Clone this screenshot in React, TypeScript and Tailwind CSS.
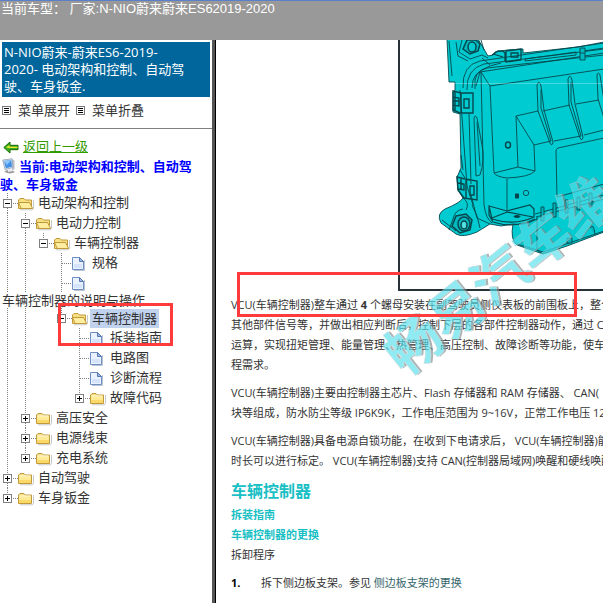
import { useState } from 'react';

interface TreeNode {
    id: string;
    label: string;
    wrapped?: boolean;
    children?: TreeNode[];
}

const TREE: TreeNode[] = [
    {
        id: 'ea',
        label: '电动架构和控制',
        children: [
            {
                id: 'power',
                label: '电动力控制',
                children: [
                    {
                        id: 'vcu',
                        label: '车辆控制器',
                        children: [
                            { id: 'spec', label: '规格' },
                            { id: 'desc', label: '车辆控制器的说明与操作', wrapped: true },
                            {
                                id: 'vcu-repair',
                                label: '车辆控制器',
                                children: [
                                    { id: 'guide', label: '拆装指南' },
                                    { id: 'circuit', label: '电路图' },
                                    { id: 'diag', label: '诊断流程' },
                                    { id: 'dtc', label: '故障代码', children: [] },
                                ],
                            },
                        ],
                    },
                ],
            },
            { id: 'hv', label: '高压安全', children: [] },
            { id: 'harness', label: '电源线束', children: [] },
            { id: 'charge', label: '充电系统', children: [] },
        ],
    },
    { id: 'ad', label: '自动驾驶', children: [] },
    { id: 'body', label: '车身钣金', children: [] },
];

// The first three subsystems hang under the first root, next to 电动力控制
const EXPANDED = ['ea', 'power', 'vcu', 'vcu-repair'];

// dotted connector, 18px per level
function Guide({ up, down, across }: { up?: boolean; down?: boolean; across?: boolean }) {
    return (
        <svg className="h-5 w-[18px] flex-none" viewBox="0 0 18 20" stroke="#808080" strokeDasharray="1 1" fill="none" aria-hidden="true">
            {up && <path d="M7.5 0V10" />}
            {down && <path d="M7.5 10V20" />}
            {across && <path d="M8 10.5H18" />}
        </svg>
    );
}

function ToggleBox({ open, last }: { open: boolean; last: boolean }) {
    return (
        <svg className="h-5 w-[18px]" viewBox="0 0 18 20" fill="none" aria-hidden="true">
            <g stroke="#808080">
                <path d="M7.5 0V6" strokeDasharray="1 1" />
                {!last && <path d="M7.5 15V20" strokeDasharray="1 1" />}
                <path d="M13 10.5H18" strokeDasharray="1 1" />
                <rect x="3.5" y="6.5" width="8" height="8" fill="#fff" />
            </g>
            <path d={open ? 'M5 10.5H10' : 'M5 10.5H10M7.5 8V13'} stroke="#000" />
        </svg>
    );
}

function FolderIcon({ open }: { open: boolean }) {
    return (
        <svg className="h-4 w-4 flex-none" viewBox="0 0 16 16" aria-hidden="true">
            <path d="M2 14.8H14.5L15.5 13V5" fill="none" stroke="#c9c9c9" />
            <path d="M.5 13.5V5L2 3.5H6L7.5 5H13.5V13.5Z" fill="#f7df84" stroke="#c09a3a" />
            {open ? (
                <path d="M.5 7.5H11.5L14.7 13.5H3.2Z" fill="#ffee9f" stroke="#c09a3a" />
            ) : (
                <>
                    <path d="M1 6.5H13V13H1Z" fill="#ffeb96" />
                    <path d="M1 10H13V13H1Z" fill="#fbd968" />
                    <path d="M1.5 6H12.5" stroke="#fffbe0" />
                </>
            )}
        </svg>
    );
}

function PageIcon() {
    return (
        <svg className="h-4 w-4 flex-none" viewBox="0 0 16 16" aria-hidden="true">
            <path d="M2 15.5H12.500V5" fill="none" stroke="#b9c3d4" />
            <path d="M.5 2.500H7.5L11.5 6.5V14.5H.5Z" fill="#eaf2ff" stroke="#6f8fc4" />
            <path d="M2 9H10V13H2Z" fill="#d5e4fb" />
            <path d="M7.5 2.500V6.5H11.5Z" fill="#9db9e6" stroke="#5778b4" />
        </svg>
    );
}

function MenuIcon() {
    return (
        <svg className="h-[9px] w-[9px] flex-none" viewBox="0 0 9 9" aria-hidden="true">
            <rect x=".5" y=".5" width="8" height="8" fill="#fff" stroke="#777" />
            <path d="M2 2.5H7M2 4.5H7M2 6.5H7" stroke="#000" />
        </svg>
    );
}

function BackIcon() {
    return (
        <svg className="h-4 w-4 flex-none" viewBox="0 0 16 16" aria-hidden="true">
            <path d="M.8 8.500L7 3V6.3H15V10.7H7V14Z" fill="#3db01c" stroke="#146a08" />
            <path d="M3 8.500L6.5 6V7.7H14.5V9.1H6.5Z" fill="#f4e637" />
        </svg>
    );
}

function ComputerIcon() {
    return (
        <svg className="mr-px inline-block h-4 w-4 align-[-3px]" viewBox="0 0 16 16" aria-hidden="true">
            <path d="M2 13.5Q8 10.5 13 14Q8 17 2 13.5Z" fill="#9b9b9b" />
            <path d="M10 1L12.500 2.5V11L10 13Z" fill="#b9c1cb" />
            <path d="M.8 2L10 .8L11 9.5L3 11.5Z" fill="#dce5ef" stroke="#8f9dae" strokeWidth=".8" />
            <path d="M2 3L9.2 2L10 8.7L3.8 10.2Z" fill="#4291e6" />
            <path d="M2 3L9.2 2L5 7Z" fill="#8dc5fb" />
            <path d="M6 11.3L9 10.7L11 13L6 14Z" fill="#e8ecf0" />
        </svg>
    );
}

interface TreeRowsProps {
    nodes: TreeNode[];
    trail: boolean[];
    openIds: string[];
    onToggle: (id: string) => void;
}

function TreeRows({ nodes, trail, openIds, onToggle }: TreeRowsProps) {
    return (
        <ul>
            {nodes.map((node, i) => {
                const last = i === nodes.length - 1;
                const open = openIds.includes(node.id);
                const selected = node.id === 'vcu-repair';
                return (
                    <li key={node.id}>
                        <div className="flex h-5 items-center whitespace-nowrap">
                            {trail.map((line, t) => <Guide key={t} up={line} down={line} />)}
                            {node.children ? (
                                <button type="button" className="flex-none" aria-label={node.label} onClick={() => onToggle(node.id)}>
                                    <ToggleBox open={open} last={last} />
                                </button>
                            ) : (
                                <Guide up down={!last} across />
                            )}
                            {node.children ? <FolderIcon open={open} /> : <PageIcon />}
                            {!node.wrapped && (
                                <a href="#" className={selected ? 'ml-0.5 bg-[#c1d2ee] px-0.5 leading-[19px]' : 'ml-1'}>{node.label}</a>
                            )}
                        </div>
                        {node.wrapped && <a href="#" className="block h-[15px] pl-0.5 leading-[15px]">{node.label}</a>}
                        {node.children && open && (
                            <TreeRows nodes={node.children} trail={[...trail, !last]} openIds={openIds} onToggle={onToggle} />
                        )}
                    </li>
                );
            })}
        </ul>
    );
}

function Sidebar() {
    const [openIds, setOpenIds] = useState<string[]>(EXPANDED);

    const toggle = (id: string) => {
        setOpenIds(prev => prev.includes(id) ? prev.filter(x => x !== id) : [...prev, id]);
    };

    return (
        <aside className="w-[215px] flex-none border-r-3 border-[#555] text-[13px] text-[#333]">
            <h1 className="mx-0.5 mt-0.5 bg-[#00669c] px-0.5 py-0.5 leading-[17px] text-white">
                N-NIO蔚来-蔚来ES6-2019-<br />2020- 电动架构和控制、自动驾<br />驶、车身钣金.
            </h1>
            <div className="flex h-8 items-center border-b border-[#808080] pb-1 pl-0.5">
                <MenuIcon />
                <button type="button" className="mr-1.5 ml-[7px]" onClick={() => setOpenIds(EXPANDED)}>菜单展开</button>
                <MenuIcon />
                <button type="button" className="ml-[7px]" onClick={() => setOpenIds([])}>菜单折叠</button>
            </div>
            <div className="mt-2 flex h-5 items-center gap-1 pl-[3px]">
                <BackIcon />
                <a href="#" className="text-[#339900] underline">返回上一级</a>
            </div>
            <p className="leading-[18px] font-bold text-[#0000ff]">
                <span className="pl-0.5"><ComputerIcon />当前:电动架构和控制、自动驾</span><br />驶、车身钣金
            </p>
            <nav className="relative">
                <TreeRows nodes={TREE} trail={[]} openIds={openIds} onToggle={toggle} />
                <div className="pointer-events-none absolute top-[110px] left-[58px] h-[43px] w-[115px] border-3 border-[#ff3b3b]" />
            </nav>
        </aside>
    );
}

function Illustration() {
    return (
        <svg className="h-[249px] w-[204px]" viewBox="400 40 204 249" fill="none" stroke="#06474d" strokeWidth=".9" aria-hidden="true">
            <path
                d="M447 39L449 82H455V90L453 92V112L460 114L461 168L457 177L458 190L463 198Q460 203 445 209Q436 214 441 223L456 234Q463 238 477 232L490 224L501 226L513 224Q510 240 517 245L543 254L567 246L604 232V42L578 47L523 53V49L507 50L495 52L493 55L488 56L478 39Z"
                fill="#00cbd1"
            />
            {/* rim */}
            <path d="M460 90L467 186L473 205M463 88Q462 65 480 61L604 43M467 90Q466 69 484 64L604 49M472 88Q472 72 487 68L604 55M476 86L480 72L604 53" />
            <path d="M525 59L576 52V55L525 61ZM583 51L604 48M475 89V80Q476 68 501 63M482 58L490 65M449 41L452 76M456 42L458 56L468 61" />
            <path d="M469 113L471 184M474 118Q475 114 477 118L482 145Q485 160 480 175L476 176ZM477 122L480 166M481 72L484 205Q486 219 492 223" />
            <path d="M461 155L463 170M460 170L465 178M471 195L477 218L490 224" />
            {/* top bolt */}
            <path d="M462 40L459 52L470 59L482 55L488 58M481 40L484 50" />
            <path d="M467 40L463 49L470 54L478 51L480 44L476 40Z" fill="#00b9c0" strokeWidth="1.5" />
            <ellipse cx="472" cy="47" rx="4" ry="5" fill="#00cbd1" strokeWidth="1.5" />
            {/* clips */}
            <path d="M492 55L498 51H503L505 53V61M506 51L521 49V60L506 62ZM511 53H518V57H511ZM493 54L503 57" strokeWidth="1.3" />
            <path d="M580 48H585V60H580ZM580 53H585" fill="#00b9c0" />
            <path d="M453 91L461 93L473 93V113L460 113L453 110ZM461 93V113M464 99H469V108H464ZM453 97L459 98V106L453 105M455 91V110M453 101H459" strokeWidth="1.4" />
            <path d="M457 177L465 179L477 181V200L464 198L458 190ZM466 179V198M470 186H474V195H470ZM458 183L464 184V190L458 189M461 178V190" strokeWidth="1.4" />
            {/* mounting ear */}
            <path d="M463 198Q470 203 466 210M463 209Q455 210 453 219L449 230M472 205L477 216L480 228M442 220L456 231" />
            <path d="M456 216L466 214L472 220L470 230L460 233L452 226Z" fill="#00b9c0" strokeWidth="1.5" />
            <ellipse cx="464" cy="224" rx="6" ry="7" strokeWidth="1.5" />
            <ellipse cx="464" cy="225" rx="3" ry="4" fill="#52dde0" strokeWidth="1.5" />
            {/* cover */}
            <path d="M481 72L490 86L604 69M490 86L494 173Q497 177 507 178Q530 177 535 171L534 145L516 116L518 167M494 173L518 167L535 171" />
            <path d="M516 116L538 111M543 111L570 105M576 104L599 100M534 145L551 141M554 141L581 136M584 135L604 130" />
            <path d="M538 111L537 85Q539 79 541 86L544 110L553 142Q552 147 550 143ZM541 90V108L551 141" />
            <path d="M569 105L568 79Q570 73 572 80L575 104L583 137Q582 142 580 138ZM571 82V102L581 136" />
            <path d="M598 99L597 75Q598 71 600 75L604 101M598 99L604 118" />
            <path d="M604 138L558 148Q556 149 556 151L557 197L604 184M507 179V211" />
            <ellipse cx="508" cy="145" rx="2.5" ry="3" strokeWidth="1.5" />
            <rect x="515.5" y="194" width="3" height="4" fill="#073f45" />
            <circle cx="526" cy="193" r="2.7" />
            {/* tray and lower flange */}
            <path d="M489 206L507 211L530 205L534 209L534 217Q515 226 492 219ZM492 218L507 212L533 217M489 206V215L493 222Q515 229 535 219" strokeWidth="1.2" />
            <ellipse cx="517" cy="216.5" rx="3" ry="1" fill="#073f45" />
            <path d="M535 214L604 195M536 217L604 199M537 217V250L543 254M513 224Q524 226 537 219M517 244L543 252L604 231" />
            <path d="M541 207H544V221H541ZM553 203H556V217H553ZM565 200H568V213H565ZM577 197H580V210H577ZM589 193H592V207H589ZM567 238H572V243H567ZM590 228Q594 222 595 235" fill="#00b3ba" />
            <path d="M400 83.5H604" stroke="#fff" strokeOpacity=".3" />
        </svg>
    );
}

function Watermark() {
    return (
        <svg className="pointer-events-none absolute top-0 left-0 h-[400px] w-full opacity-65" aria-hidden="true">
            <g
                transform="translate(177 323) rotate(-39)"
                className="font-['Noto_Sans_CJK_SC',sans-serif] text-[55px] font-bold"
            >
                <text x="2" y="20" fill="#7d8a8c">畅易汽车维</text>
                <text x="0" y="19" fill="#55dfec" stroke="#b5ced1" strokeWidth=".6">畅易汽车维</text>
            </g>
        </svg>
    );
}

function Manual() {
    return (
        <main className="relative min-w-0 flex-1 overflow-hidden border-l border-black bg-white text-[11px] leading-5 whitespace-nowrap text-[#333]">
            <div className="ml-[182px] h-[251px] border-b-2 border-l-2 border-[#263238]">
                <Illustration />
            </div>
            <div className="pl-[15px]">
                <p className="mt-1">
                    VCU(车辆控制器)整车通过 <b>4</b> 个螺母安装在副驾驶员侧仪表板的前围板上，整个<br />
                    其他部件信号等，并做出相应判断后，控制下层的各部件控制器动作，通过 CA<br />
                    运算，实现扭矩管理、能量管理、热管理、高压控制、故障诊断等功能，使车辆<br />
                    程需求。
                </p>
                <p className="mt-2">
                    VCU(车辆控制器)主要由控制器主芯片、Flash 存储器和 RAM 存储器、 CAN(<br />
                    块等组成，防水防尘等级 IP6K9K，工作电压范围为 9~16V，正常工作电压 12
                </p>
                <p className="mt-2">
                    VCU(车辆控制器)具备电源自锁功能，在收到下电请求后， VCU(车辆控制器)能<br />
                    时长可以进行标定。 VCU(车辆控制器)支持 CAN(控制器局域网)唤醒和硬线唤醒
                </p>
                <h2 className="mt-2 text-base leading-6 font-bold text-[#19bfc5]">车辆控制器</h2>
                <h3 className="mt-0.5 font-bold text-[#19bfc5]">拆装指南</h3>
                <h3 className="font-bold text-[#19bfc5]">车辆控制器的更换</h3>
                <h4>拆卸程序</h4>
                <ol className="mt-2">
                    <li className="flex">
                        <b className="w-[30px] text-black">1.</b>
                        <span>拆下侧边板支架。参见 <a href="#" className="text-[#35666b]">侧边板支架的更换</a></span>
                    </li>
                </ol>
            </div>
            <Watermark />
            <div className="pointer-events-none absolute top-[232px] left-[21px] h-[45px] w-[340px] border-3 border-[#ff3b3b]" />
        </main>
    );
}

export default function App() {
    return (
        <div className="flex min-h-screen flex-col overflow-hidden bg-white font-['Open_Sans','Noto_Sans_CJK_SC',sans-serif]">
            <header className="h-10 border-t border-[#5b7fc8] bg-[#999] pl-px font-['Liberation_Sans','Noto_Sans_CJK_SC',sans-serif] text-[13px] leading-[15px] text-white">
                当前车型：&nbsp;厂家:N-NIO蔚来蔚来ES62019-2020
            </header>
            <div className="flex flex-1">
                <Sidebar />
                <Manual />
            </div>
        </div>
    );
}
